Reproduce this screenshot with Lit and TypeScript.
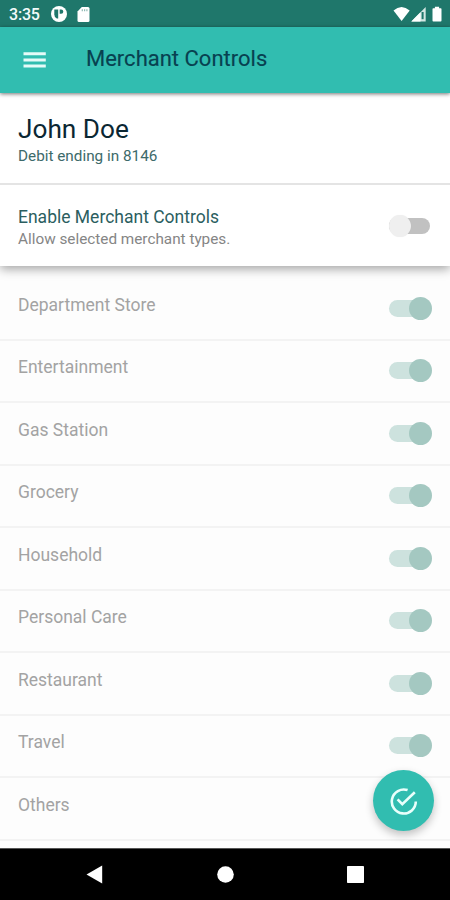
import { LitElement, html, css } from "lit";
import { customElement, property } from "lit/decorators.js";

@customElement("toggle-switch")
export class ToggleSwitch extends LitElement {
  @property({ type: Boolean, reflect: true }) on = false;

  static styles = css`
    :host { display: block; flex: none; width: 43px; height: 23px; }
    .box { display: flex; align-items: center; height: 23px; width: 43px; }
    .track { width: 41px; height: 16px; border-radius: 8px; background: #c1c1c1; display: flex; align-items: center; }
    .thumb { flex: none; width: 22px; height: 22px; border-radius: 50%; background: #efefef; box-shadow: 0 0 1px rgba(0, 0, 0, 0.08); }
    :host([on]) .track { height: 17px; border-radius: 9px; background: #cde2de; }
    :host([on]) .thumb { width: 23px; height: 23px; background: #a4c8c1; margin-left: 20px; box-shadow: none; }
  `;

  render() {
    return html`<div class="box"><div class="track"><div class="thumb"></div></div></div>`;
  }
}

@customElement("app-root")
export class AppRoot extends LitElement {
  private categories = [
    "Department Store",
    "Entertainment",
    "Gas Station",
    "Grocery",
    "Household",
    "Personal Care",
    "Restaurant",
    "Travel",
    "Others",
  ];

  static styles = css`
    :host {
      display: flex;
      flex-direction: column;
      position: relative;
      width: 450px;
      height: 900px;
      overflow: hidden;
      background: #fdfdfd;
      font-family: Roboto, sans-serif;
    }
    * { box-sizing: border-box; }
    svg { display: block; flex: none; }
    .status {
      flex: none; height: 27px; background: #1f776b; color: #f3fbfa;
      display: flex; align-items: center; padding: 1px 8px 0 9px;
    }
    .time { font-size: 16px; line-height: 20px; font-weight: 500; width: 42px; letter-spacing: -0.2px; padding-top: 1px; }
    .left-icons { display: flex; gap: 10px; flex: 1; align-items: center; }
    .bar {
      flex: none; height: 65.5px; background: #31bdb0; display: flex; align-items: center;
      position: relative; z-index: 4; box-shadow: 0 1px 4px rgba(0, 0, 0, 0.55);
      padding-left: 23px;
    }
    .title { margin-left: 40px; font-size: 22px; line-height: 26px; color: #084150; padding-bottom: 1px; -webkit-text-stroke: 0.15px #084150; }
    .account {
      flex: none; height: 92.5px; background: #fff; border-bottom: 2.5px solid #e4e4e4;
      padding: 21px 18px 0;
      position: relative; z-index: 3;
    }
    .name { font-size: 26.2px; line-height: 31px; color: #0b2733; }
    .card { font-size: 15.3px; line-height: 18px; color: #3d6a6a; margin-top: 2px; }
    .enable {
      flex: none; height: 81px; background: #fff; position: relative; z-index: 2;
      display: flex; justify-content: space-between; padding: 21px 18px 0 18px;
      box-shadow: 0 3px 10px rgba(0, 0, 0, 0.36);
    }
    .label { font-size: 17.5px; line-height: 22px; color: #2b5e60; }
    .hint { font-size: 15.3px; line-height: 18px; color: #858585; margin-top: 2px; }
    .enable toggle-switch { margin-top: 8.5px; }
    .list { flex: 1; overflow: hidden; padding-top: 12px; }
    .row {
      height: 62.5px; border-bottom: 2px solid #f3f3f3; display: flex;
      justify-content: space-between; padding: 15.5px 18px 0 18px;
    }
    .row .text { font-size: 17.5px; line-height: 22px; color: #a3a3a3; }
    .row toggle-switch { margin-top: 3px; }
    .nav {
      flex: none; height: 52px; background: #000; border-top: 1px solid #555;
      display: grid; grid-template-columns: 161px 128px 161px; align-items: center;
    }
    .nav svg { justify-self: center; }
    .nav .back { margin-left: 27px; }
    .nav .recent { margin-right: 29px; }
    .fab {
      position: absolute; left: 373px; top: 770px; width: 61px; height: 61px; border-radius: 50%;
      background: #31bdb0; border: 0; padding: 0; z-index: 5;
      display: flex; align-items: center; justify-content: center;
      box-shadow: 0 4px 8px rgba(0, 0, 0, 0.24);
    }
  `;

  render() {
    return html`
      <div class="status">
        <div class="time">3:35</div>
        <div class="left-icons">
          <svg width="16" height="16" viewBox="0 0 16 16">
            <circle cx="8" cy="8" r="8" fill="#fff" />
            <path d="M3.3 3.6H7.2V12.6H5.8Q3.3 11.4 3.3 8.6Z" fill="#1f776b" />
            <path d="M8.7 3.6H10.2A2.1 2.1 0 0 1 10.2 7.8H8.7Z" fill="#1f776b" />
          </svg>
          <svg width="13" height="15" viewBox="0 0 13 15">
            <path d="M4.8 0H11Q12.5 0 12.5 1.5V13.4Q12.5 14.9 11 14.9H2Q.5 14.9 .5 13.4V4.6Z" fill="#fff" />
            <path d="M5.3 2.2V4.2M7.6 2.2V4.2M9.9 2.2V4.2" stroke="#8fbab4" stroke-width="1.2" />
          </svg>
        </div>
        <svg width="50" height="17" viewBox="0 0 50 17">
          <path d="M1.5 4.6Q9.5-2.4 17.7 4.6L9.6 15Z" fill="#fff" />
          <path d="M33.7 1V15.5H19.3Z" fill="#d3e6e3" />
          <path d="M28.5 6.3V15.5H19.3Z" fill="#fff" />
          <path d="M30.6 6V13.2" stroke="#1f776b" stroke-width="2" />
          <path d="M42.9 .8H47.1V2.2H48.7Q49.5 2.2 49.5 3V14.6Q49.5 15.6 48.7 15.6H41.3Q40.5 15.6 40.5 14.6V3Q40.5 2.2 41.3 2.2H42.9Z" fill="#fff" />
        </svg>
      </div>
      <div class="bar">
        <svg width="23" height="18" viewBox="0 0 23 18">
          <path d="M.5 2.7H22.8M.5 8.9H22.8M.5 15.1H22.8" stroke="#e4fbf8" stroke-width="3" />
        </svg>
        <div class="title">Merchant Controls</div>
      </div>
      <div class="account">
        <div class="name">John Doe</div>
        <div class="card">Debit ending in 8146</div>
      </div>
      <div class="enable">
        <div>
          <div class="label">Enable Merchant Controls</div>
          <div class="hint">Allow selected merchant types.</div>
        </div>
        <toggle-switch></toggle-switch>
      </div>
      <div class="list">
        ${this.categories.map(
          (c) => html`<div class="row"><div class="text">${c}</div><toggle-switch on></toggle-switch></div>`
        )}
      </div>
      <div class="nav">
        <svg class="back" width="17" height="19" viewBox="0 0 17 19"><path d="M16.2 .5V18.5L.5 9.5Z" fill="#fff" /></svg>
        <svg width="17" height="17" viewBox="0 0 17 17"><circle cx="8.5" cy="8.5" r="8.3" fill="#fff" /></svg>
        <svg class="recent" width="17" height="17" viewBox="0 0 17 17"><rect width="17" height="17" rx=".8" fill="#fff" /></svg>
      </div>
      <button class="fab" aria-label="Save">
        <svg width="28" height="28" viewBox="0 0 28 28" fill="none" stroke="#e9fffb" stroke-width="2.6">
          <path d="M25.8 14.5A12 12 0 1 1 17.6 3.1" />
          <path d="M7.6 12.4L12.3 17.2L24.8 5.2" />
        </svg>
      </button>
    `;
  }
}
